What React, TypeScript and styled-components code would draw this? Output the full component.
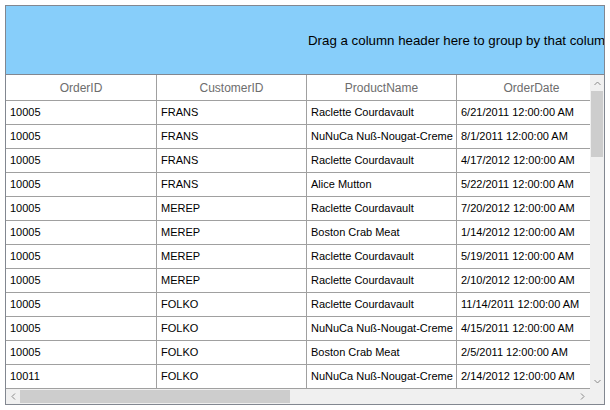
import React from "react";
import styled, { createGlobalStyle } from "styled-components";

const Global = createGlobalStyle`
  html, body { margin: 0; padding: 0; background: #ffffff; }
  body { font-family: "Liberation Sans", Arial, sans-serif; }
`;

const Page = styled.div`
  padding: 5px 0 0 5px;
`;

const Frame = styled.div`
  width: 598px;
  height: 398px;
  border: 1px solid #828790;
  display: flex;
  flex-direction: column;
  overflow: hidden;
  background: #ffffff;
`;

const GroupPanel = styled.div`
  flex: none;
  box-sizing: border-box;
  height: 69px;
  background: #87cefa;
  border-bottom: 1px solid #828790;
  display: flex;
  align-items: center;
  padding-left: 302px;
  padding-top: 1px;
  white-space: nowrap;
  overflow: hidden;
  font-size: 13.3px;
  color: #000000;
`;

const Body = styled.div`
  flex: 1;
  min-height: 0;
  display: grid;
  grid-template-columns: 1fr 14px;
  grid-template-rows: 1fr 15px;
`;

const Viewport = styled.div`
  overflow: hidden;
  min-width: 0;
`;

const Table = styled.div`
  display: grid;
  grid-template-columns: 151px 150px 150px 150px;
  width: 601px;
`;

const HeadCell = styled.div`
  box-sizing: border-box;
  height: 26px;
  padding-top: 1px;
  border-right: 1px solid #a0a0a0;
  border-bottom: 1px solid #a0a0a0;
  display: flex;
  align-items: center;
  justify-content: center;
  font-size: 12px;
  color: #6d6d6d;
  white-space: nowrap;
  overflow: hidden;
`;

const Cell = styled.div`
  box-sizing: border-box;
  height: 24px;
  padding: 0 0 1px 4px;
  border-right: 1px solid #a0a0a0;
  border-bottom: 1px solid #a0a0a0;
  display: flex;
  align-items: center;
  font-size: 11px;
  color: #000000;
  white-space: nowrap;
  overflow: hidden;
`;

const VScroll = styled.div`
  background: #f0f0f0;
  display: flex;
  flex-direction: column;
  align-items: stretch;
`;

const HScroll = styled.div`
  background: #f0f0f0;
  display: flex;
  align-items: stretch;
`;

const Corner = styled.div`
  background: #f0f0f0;
`;

const ArrowBox = styled.div<{ $w?: number; $h?: number }>`
  flex: none;
  width: ${(p) => (p.$w ? `${p.$w}px` : "auto")};
  height: ${(p) => (p.$h ? `${p.$h}px` : "auto")};
  display: flex;
  align-items: center;
  justify-content: center;
`;

const Track = styled.div<{ $vertical?: boolean }>`
  flex: 1;
  display: flex;
  flex-direction: ${(p) => (p.$vertical ? "column" : "row")};
`;

const Thumb = styled.div<{ $vertical?: boolean; $size: number; $offset: number }>`
  flex: none;
  background: #cdcdcd;
  ${(p) =>
    p.$vertical
      ? `height: ${p.$size}px; margin: ${p.$offset}px 1px 0 1px;`
      : `width: ${p.$size}px; margin: 1px 0 1px ${p.$offset}px;`}
`;

const Chevron = ({ dir }: { dir: "up" | "down" | "left" | "right" }) => {
  const d: Record<string, string> = {
    up: "M1.5 5 L4.5 2 L7.5 5",
    down: "M1.5 2 L4.5 5 L7.5 2",
    left: "M5 1.5 L2 4.5 L5 7.5",
    right: "M2 1.5 L5 4.5 L2 7.5",
  };
  const vertical = dir === "up" || dir === "down";
  return (
    <svg width={vertical ? 9 : 7} height={vertical ? 7 : 9} viewBox={vertical ? "0 0 9 7" : "0 0 7 9"}>
      <path d={d[dir]} fill="none" stroke="#8a8a8a" strokeWidth="1" />
    </svg>
  );
};

const columns = ["OrderID", "CustomerID", "ProductName", "OrderDate"];

const rows: string[][] = [
  ["10005", "FRANS", "Raclette Courdavault", "6/21/2011 12:00:00 AM"],
  ["10005", "FRANS", "NuNuCa Nuß-Nougat-Creme", "8/1/2011 12:00:00 AM"],
  ["10005", "FRANS", "Raclette Courdavault", "4/17/2012 12:00:00 AM"],
  ["10005", "FRANS", "Alice Mutton", "5/22/2011 12:00:00 AM"],
  ["10005", "MEREP", "Raclette Courdavault", "7/20/2012 12:00:00 AM"],
  ["10005", "MEREP", "Boston Crab Meat", "1/14/2012 12:00:00 AM"],
  ["10005", "MEREP", "Raclette Courdavault", "5/19/2011 12:00:00 AM"],
  ["10005", "MEREP", "Raclette Courdavault", "2/10/2012 12:00:00 AM"],
  ["10005", "FOLKO", "Raclette Courdavault", "11/14/2011 12:00:00 AM"],
  ["10005", "FOLKO", "NuNuCa Nuß-Nougat-Creme", "4/15/2011 12:00:00 AM"],
  ["10005", "FOLKO", "Boston Crab Meat", "2/5/2011 12:00:00 AM"],
  ["10011", "FOLKO", "NuNuCa Nuß-Nougat-Creme", "2/14/2012 12:00:00 AM"],
];

export default function App() {
  return (
    <Page>
      <Global />
      <Frame>
        <GroupPanel>Drag a column header here to group by that column</GroupPanel>
        <Body>
          <Viewport>
            <Table>
              {columns.map((c) => (
                <HeadCell key={c}>{c}</HeadCell>
              ))}
              {rows.map((r, i) =>
                r.map((v, j) => <Cell key={`${i}-${j}`}>{v}</Cell>)
              )}
            </Table>
          </Viewport>
          <VScroll>
            <ArrowBox $h={16}>
              <Chevron dir="up" />
            </ArrowBox>
            <Track $vertical>
              <Thumb $vertical $size={66} $offset={0} />
            </Track>
            <ArrowBox $h={16}>
              <Chevron dir="down" />
            </ArrowBox>
          </VScroll>
          <HScroll>
            <ArrowBox $w={14}>
              <Chevron dir="left" />
            </ArrowBox>
            <Track>
              <Thumb $size={270} $offset={0} />
            </Track>
            <ArrowBox $w={16}>
              <Chevron dir="right" />
            </ArrowBox>
          </HScroll>
          <Corner />
        </Body>
      </Frame>
    </Page>
  );
}
